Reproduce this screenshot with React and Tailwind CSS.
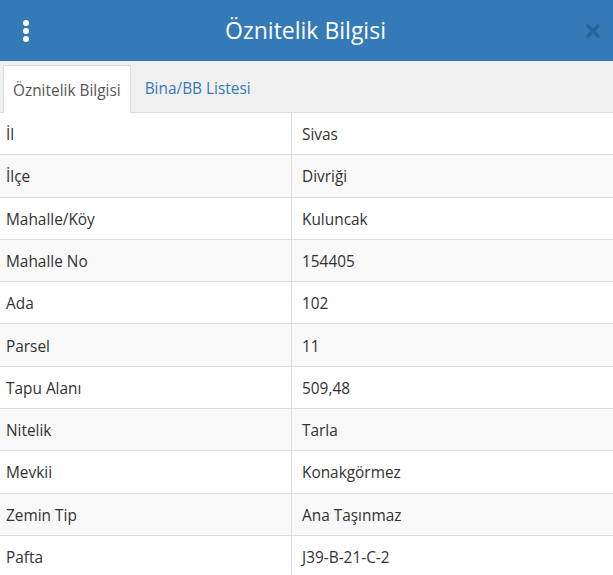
import React from "react";

const ROWS = [
  ["İl", "Sivas"],
  ["İlçe", "Divriği"],
  ["Mahalle/Köy", "Kuluncak"],
  ["Mahalle No", "154405"],
  ["Ada", "102"],
  ["Parsel", "11"],
  ["Tapu Alanı", "509,48"],
  ["Nitelik", "Tarla"],
  ["Mevkii", "Konakgörmez"],
  ["Zemin Tip", "Ana Taşınmaz"],
  ["Pafta", "J39-B-21-C-2"],
];

const App = () => {
  return (
    <div className="w-[613px] h-[575px] overflow-hidden bg-white text-[#333] text-[15.4px]" style={{ fontFamily: '"Open Sans", sans-serif' }}>
      <div className="h-[61px] bg-[#337ab7] flex items-center relative">
        <div className="w-[52px] flex flex-col items-center gap-[2px]">
          <span className="w-[6px] h-[6px] rounded-full bg-white" />
          <span className="w-[6px] h-[6px] rounded-full bg-white" />
          <span className="w-[6px] h-[6px] rounded-full bg-white" />
        </div>
        <h1 className="flex-1 text-center text-white text-[23px] pr-[2px]">Öznitelik Bilgisi</h1>
        <div className="w-[52px] flex justify-end pr-[12px]">
          <svg width="16" height="16" viewBox="0 0 16 16">
            <path d="M3 3 L13 13 M13 3 L3 13" stroke="#2a6496" strokeWidth="3.6" strokeLinecap="round" />
          </svg>
        </div>
      </div>
      <div className="h-[52px] bg-[#f0f0f0] border-b border-[#ddd] flex items-end pl-[3px]">
        <div className="h-[48px] px-[9px] pt-[2px] flex items-center bg-white border border-b-0 border-[#ddd] text-[#555] -mb-px">
          Öznitelik Bilgisi
        </div>
        <div className="h-[48px] px-[14px] pt-[2px] flex items-center text-[#337ab7]">Bina/BB Listesi</div>
      </div>
      <div>
        {ROWS.map(([k, v], i) => (
          <div key={k} className={`flex h-[42.3px] border-b border-[#ddd] ${i % 2 === 1 ? "bg-[#f9f9f9]" : "bg-white"}`}>
            <div className="w-[292px] border-r border-[#ddd] flex items-center pl-[6px] pt-[2px]">{k}</div>
            <div className="flex-1 flex items-center pl-[10px] pt-[2px]">{v}</div>
          </div>
        ))}
      </div>
    </div>
  );
};

export default App;
